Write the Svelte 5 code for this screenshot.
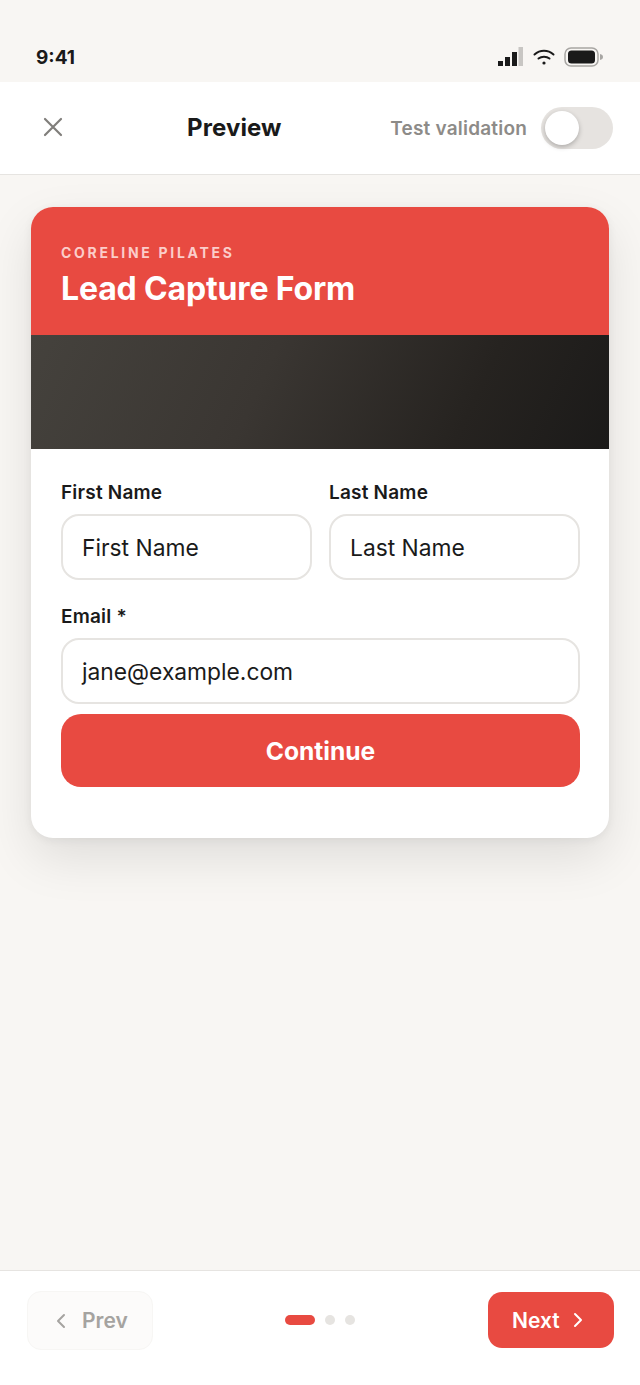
<script>
  const dots = [true, false, false];
</script>

<div class="screen">
  <div class="status">
    <span class="time">9:41</span>
    <div class="status-icons">
      <svg width="26" height="20" viewBox="0 0 26 20">
        <rect x="0" y="14" width="5" height="5" fill="#1a1a1a" />
        <rect x="7" y="10" width="5" height="9" fill="#1a1a1a" />
        <rect x="14" y="5" width="5" height="14" fill="#1a1a1a" />
        <rect x="20.500" y="0" width="4.500" height="19" fill="#c8c6c3" />
      </svg>
      <svg width="22" height="18" viewBox="0 0 22 18" fill="none" stroke="#1a1a1a" stroke-width="2" stroke-linecap="round">
        <path d="M1.5 6.5C7 1.5 15 1.5 20.5 6.5" />
        <path d="M5.5 10.5C8.5 8 13.5 8 16.5 10.5" />
        <circle cx="11" cy="15" r="1.6" fill="#1a1a1a" stroke="none" />
      </svg>
      <svg width="40" height="20" viewBox="0 0 40 20">
        <rect x="1" y="1" width="33" height="18" rx="6" fill="none" stroke="#a8a6a3" stroke-width="1.5" />
        <rect x="4" y="3.5" width="27" height="13" rx="3.5" fill="#1a1a1a" />
        <path d="M36 7c2 .4 3 1.500 3 3s-1 2.600-3 3z" fill="#a8a6a3" />
      </svg>
    </div>
  </div>

  <header class="topbar">
    <button class="close" aria-label="Close">
      <svg width="22" height="22" viewBox="0 0 22 22" fill="none" stroke="#807e7b" stroke-width="2.2" stroke-linecap="round">
        <path d="M3 3l16 16M19 3L3 19" />
      </svg>
    </button>
    <h1>Preview</h1>
    <div class="validate">
      <span>Test validation</span>
      <div class="toggle"><div class="knob"></div></div>
    </div>
  </header>

  <main>
    <section class="card">
      <div class="hero">
        <div class="eyebrow">CORELINE PILATES</div>
        <h2>Lead Capture Form</h2>
      </div>
      <div class="photo"></div>
      <form class="fields">
        <div class="row">
          <label class="field">
            <span>First Name</span>
            <div class="input">First Name</div>
          </label>
          <label class="field">
            <span>Last Name</span>
            <div class="input">Last Name</div>
          </label>
        </div>
        <label class="field">
          <span>Email *</span>
          <div class="input">jane@example.com</div>
        </label>
        <div class="continue">Continue</div>
      </form>
    </section>
  </main>

  <footer>
    <div class="nav prev">
      <svg width="12" height="18" viewBox="0 0 12 18" fill="none" stroke="#a5a3a0" stroke-width="2" stroke-linecap="round" stroke-linejoin="round">
        <path d="M9 3L3 9l6 6" />
      </svg>
      Prev
    </div>
    <div class="dots">
      {#each dots as active}
        <i class:active></i>
      {/each}
    </div>
    <div class="nav next">
      Next
      <svg width="12" height="18" viewBox="0 0 12 18" fill="none" stroke="#fff" stroke-width="2" stroke-linecap="round" stroke-linejoin="round">
        <path d="M3 3l6 6-6 6" />
      </svg>
    </div>
  </footer>
</div>

<style>
  :global(body) {
    margin: 0;
    background: #f8f6f3;
  }

  .screen {
    width: 640px;
    height: 1385px;
    display: flex;
    flex-direction: column;
    overflow: hidden;
    background: #f8f6f3;
    font-family: Inter, "Liberation Sans", sans-serif;
    color: #1a1a1a;
  }

  .status {
    height: 82px;
    flex: none;
    box-sizing: border-box;
    padding: 32px 36px 0;
    display: flex;
    justify-content: space-between;
    align-items: center;
  }

  .time {
    font-size: 19px;
    font-weight: 700;
  }

  .status-icons {
    display: flex;
    align-items: center;
    gap: 9px;
  }

  .topbar {
    height: 93px;
    flex: none;
    box-sizing: border-box;
    background: #fff;
    border-bottom: 1px solid #e6e4e1;
    display: flex;
    align-items: center;
    padding: 0 27px 2px 42px;
  }

  .close {
    border: 0;
    background: none;
    padding: 0;
    display: flex;
  }

  h1 {
    margin: 0 0 0 123px;
    font-size: 24px;
    font-weight: 700;
    letter-spacing: 0.1px;
  }

  .validate {
    margin-left: auto;
    margin-top: 2px;
    display: flex;
    align-items: center;
    gap: 14px;
    font-size: 19px;
    font-weight: 600;
    letter-spacing: 0.2px;
    color: #8d8b88;
  }

  .toggle {
    width: 72px;
    height: 42px;
    border-radius: 21px;
    background: #e6e3e0;
    display: flex;
    align-items: center;
    padding: 0 4px;
    box-sizing: border-box;
  }

  .knob {
    width: 34px;
    height: 34px;
    border-radius: 50%;
    background: #fff;
    box-shadow: 0 2px 5px rgba(0, 0, 0, 0.25);
  }

  main {
    flex: 1;
    padding: 32px 31px 0;
  }

  .card {
    height: 631px;
    border-radius: 22px;
    background: #fff;
    overflow: hidden;
    box-shadow: 0 20px 50px rgba(0, 0, 0, 0.1), 0 2px 10px rgba(0, 0, 0, 0.06);
  }

  .hero {
    height: 128px;
    box-sizing: border-box;
    background: #e84a41;
    padding: 37px 30px 0;
    color: #fff;
  }

  .eyebrow {
    font-size: 14px;
    line-height: 18px;
    font-weight: 700;
    letter-spacing: 2.7px;
    color: #fbcdca;
  }

  h2 {
    margin: 8px 0 0;
    font-size: 32px;
    line-height: 38px;
    font-weight: 700;
    letter-spacing: -0.15px;
  }

  .photo {
    height: 114px;
    background: linear-gradient(115deg, #45423d 0%, #3a3632 40%, #262320 75%, #1b1a19 100%);
  }

  .fields {
    padding: 31px 29px 0 30px;
    display: flex;
    flex-direction: column;
    gap: 24px;
  }

  .row {
    display: grid;
    grid-template-columns: 1fr 1fr;
    gap: 17px;
  }

  .field {
    display: flex;
    flex-direction: column;
    gap: 9px;
  }

  .field span {
    font-size: 19px;
    line-height: 25px;
    font-weight: 600;
    letter-spacing: 0.2px;
  }

  .input {
    height: 66px;
    box-sizing: border-box;
    border: 2px solid #e6e4e1;
    border-radius: 18px;
    padding: 0 19px;
    display: flex;
    align-items: center;
    font-size: 22.8px;
  }

  .continue {
    height: 73px;
    margin-top: -14px;
    border-radius: 20px;
    background: #e84a41;
    color: #fff;
    display: flex;
    align-items: center;
    justify-content: center;
    font-size: 24.6px;
    font-weight: 700;
  }

  footer {
    height: 115px;
    flex: none;
    box-sizing: border-box;
    background: #fff;
    border-top: 1px solid #e6e4e1;
    padding: 20px 26px 0 27px;
    display: flex;
    justify-content: space-between;
    align-items: flex-start;
  }

  .nav {
    width: 126px;
    height: 56px;
    box-sizing: border-box;
    border-radius: 14px;
    display: flex;
    align-items: center;
    font-size: 21px;
    font-weight: 600;
  }

  .prev {
    background: #fcfbfa;
    border: 1px solid #f7f6f4;
    color: #a5a3a0;
    height: 59px;
    padding-left: 27px;
    gap: 15px;
  }

  .next {
    background: #e84a41;
    color: #fff;
    margin-top: 1px;
    padding-left: 24px;
    gap: 12px;
  }

  .dots {
    display: flex;
    align-items: center;
    gap: 10px;
    height: 58px;
    margin-right: 2px;
  }

  .dots i {
    width: 10px;
    height: 10px;
    border-radius: 5px;
    background: #e6e4e1;
  }

  .dots i.active {
    width: 30px;
    background: #e84a41;
  }
</style>
